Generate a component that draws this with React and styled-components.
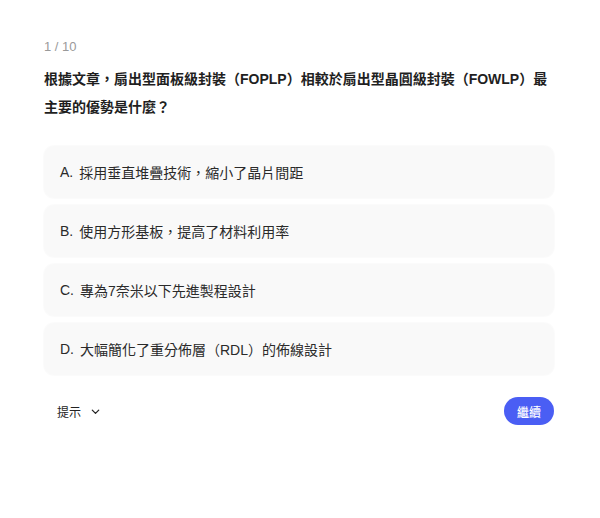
import React from "react";
import styled, { createGlobalStyle } from "styled-components";

const Global = createGlobalStyle`
  html, body { margin: 0; padding: 0; background: #fff; }
  body { font-family: "Liberation Sans", "Noto Sans CJK TC", sans-serif; }
`;

const Page = styled.div`
  width: 510px;
  padding: 37px 46px 0 44px;
`;

const Counter = styled.div`
  font-size: 13px;
  line-height: 20px;
  color: #9a9a9a;
`;

const Question = styled.h2`
  margin: 8px 0 25px;
  font-size: 14px;
  line-height: 28px;
  font-weight: 700;
  color: #1f1f1f;
`;

const Options = styled.div`
  display: flex;
  flex-direction: column;
  gap: 7px;
`;

const Option = styled.button`
  display: flex;
  align-items: center;
  height: 52px;
  padding: 0 16px;
  border: none;
  border-radius: 10px;
  background: #f9f9f9;
  box-shadow: 0 0 0 1px rgba(0, 0, 0, 0.015);
  font-family: inherit;
  font-size: 14px;
  color: #2a2a2a;
  text-align: left;
  cursor: pointer;
`;

const Letter = styled.span`
  margin-right: 6px;
`;

const Footer = styled.div`
  display: flex;
  align-items: center;
  justify-content: space-between;
  margin-top: 22px;
`;

const Hint = styled.button`
  display: flex;
  align-items: center;
  gap: 9px;
  padding: 0 0 0 13px;
  border: none;
  background: none;
  font-family: inherit;
  font-size: 12px;
  color: #222;
  cursor: pointer;
`;

const Continue = styled.button`
  height: 28px;
  padding: 0 13px;
  border: none;
  border-radius: 14px;
  background: #4a5ef4;
  color: #fff;
  font-family: inherit;
  font-size: 12px;
  font-weight: 500;
  cursor: pointer;
`;

const options = [
  ["A.", "採用垂直堆疊技術，縮小了晶片間距"],
  ["B.", "使用方形基板，提高了材料利用率"],
  ["C.", "專為7奈米以下先進製程設計"],
  ["D.", "大幅簡化了重分佈層（RDL）的佈線設計"],
];

export default function App() {
  return (
    <>
      <Global />
      <Page>
        <Counter>1 / 10</Counter>
        <Question>
          根據文章，扇出型面板級封裝（FOPLP）相較於扇出型晶圓級封裝（FOWLP）最主要的優勢是什麼？
        </Question>
        <Options>
          {options.map(([l, t]) => (
            <Option key={l}>
              <Letter>{l}</Letter>
              {t}
            </Option>
          ))}
        </Options>
        <Footer>
          <Hint>
            提示
            <svg width="11" height="11" viewBox="0 0 24 24" fill="none" stroke="#222" strokeWidth="2.8" strokeLinecap="round" strokeLinejoin="round">
              <path d="M5 9l7 7 7-7" />
            </svg>
          </Hint>
          <Continue>繼續</Continue>
        </Footer>
      </Page>
    </>
  );
}
